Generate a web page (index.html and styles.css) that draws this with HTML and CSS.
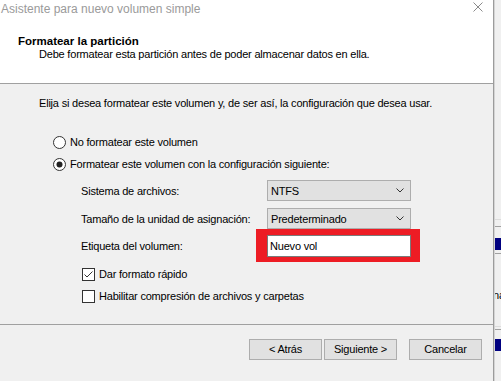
FILE: index.html
```html
<!DOCTYPE html>
<html lang="es">
<head>
<meta charset="utf-8">
<title>Asistente para nuevo volumen simple</title>
<link rel="stylesheet" href="styles.css">
</head>
<body>
<div class="screen">
  <div class="dialog">
    <div class="top">
      <div class="titlebar">
        <span class="title">Asistente para nuevo volumen simple</span>
        <svg class="close" width="10" height="10" viewBox="0 0 10 10"><path d="M0.5 0.5 L9.5 9.5 M9.5 0.5 L0.5 9.5" stroke="#8a8a8a" stroke-width="1" fill="none"/></svg>
      </div>
      <div class="h-title">Formatear la partición</div>
      <div class="h-sub">Debe formatear esta partición antes de poder almacenar datos en ella.</div>
    </div>
    <div class="body">
      <div class="intro">Elija si desea formatear este volumen y, de ser así, la configuración que desea usar.</div>
      <div class="opt opt-first">
        <svg class="mark" width="13" height="13" viewBox="0 0 13 13"><circle cx="6.5" cy="6.5" r="6" fill="#fff" stroke="#333"/></svg>
        <span class="opt-label">No formatear este volumen</span>
      </div>
      <div class="opt">
        <svg class="mark" width="13" height="13" viewBox="0 0 13 13"><circle cx="6.5" cy="6.5" r="6" fill="#fff" stroke="#333"/><circle cx="6.5" cy="6.5" r="3" fill="#222"/></svg>
        <span class="opt-label">Formatear este volumen con la configuración siguiente:</span>
      </div>
      <div class="field field-fs">
        <span class="f-label">Sistema de archivos:</span>
        <div class="select"><span>NTFS</span><svg width="8" height="5" viewBox="0 0 8 5"><path d="M0.5 0.5 L4 4 L7.5 0.5" fill="none" stroke="#333"/></svg></div>
      </div>
      <div class="field field-alloc">
        <span class="f-label">Tamaño de la unidad de asignación:</span>
        <div class="select"><span>Predeterminado</span><svg width="8" height="5" viewBox="0 0 8 5"><path d="M0.5 0.5 L4 4 L7.5 0.5" fill="none" stroke="#333"/></svg></div>
      </div>
      <div class="field field-vol">
        <span class="f-label">Etiqueta del volumen:</span>
        <div class="textbox-wrap">
          <div class="textbox">Nuevo vol</div>
          <div class="highlight"></div>
        </div>
      </div>
      <div class="chk chk-first">
        <svg class="mark" width="13" height="13" viewBox="0 0 13 13"><rect x="0.5" y="0.5" width="12" height="12" fill="#fff" stroke="#333"/><path d="M2.5 6.5 L5 9 L10.5 3.5" fill="none" stroke="#333"/></svg>
        <span class="chk-label">Dar formato rápido</span>
      </div>
      <div class="chk">
        <svg class="mark" width="13" height="13" viewBox="0 0 13 13"><rect x="0.5" y="0.5" width="12" height="12" fill="#fff" stroke="#333"/></svg>
        <span class="chk-label">Habilitar compresión de archivos y carpetas</span>
      </div>
    </div>
    <div class="footer">
      <div class="btn">&lt; Atrás</div>
      <div class="btn">Siguiente &gt;</div>
      <div class="btn btn-cancel">Cancelar</div>
    </div>
  </div>
  <div class="backdrop">
    <div class="bd-fill bd-a"></div>
    <div class="bd-line-light"></div>
    <div class="bd-fill bd-b"></div>
    <div class="bd-line"></div>
    <div class="bd-fill bd-c"></div>
    <div class="bd-bar"></div>
    <div class="bd-fill bd-d"></div>
    <div class="bd-line"></div>
    <div class="bd-text">na</div>
    <div class="bd-fill bd-e"></div>
    <div class="bd-line-light"></div>
    <div class="bd-fill bd-f"></div>
    <div class="bd-line"></div>
    <div class="bd-fill bd-g"></div>
    <div class="bd-bar"></div>
  </div>
</div>
</body>
</html>
```
FILE: styles.css
```css
html, body {
  margin: 0;
  padding: 0;
}
body {
  font-family: "Liberation Sans", Arial, sans-serif;
  font-size: 11px;
  color: #000;
  background: #f0f0f0;
  width: 501px;
  height: 381px;
  overflow: hidden;
}
.screen {
  display: flex;
  width: 501px;
  height: 381px;
}
.dialog {
  width: 493px;
  height: 381px;
  flex: none;
  display: flex;
  flex-direction: column;
  background: #f0f0f0;
  border-right: 1px solid #9c9c9c;
}
.top {
  background: #fff;
  height: 83px;
  flex: none;
  border-bottom: 1px solid #a0a0a0;
}
.titlebar {
  display: flex;
  justify-content: space-between;
  align-items: flex-start;
  height: 35px;
  padding: 0 10px 0 1px;
}
.title {
  font-size: 12px;
  line-height: 15px;
  padding-top: 2px;
  color: #9a9a9a;
}
.close {
  margin-top: 2px;
}
.h-title {
  font-weight: bold;
  font-size: 11.5px;
  line-height: 13px;
  padding-left: 18px;
}
.h-sub {
  line-height: 13px;
  padding-left: 39px;
  letter-spacing: -0.2px;
}
.body {
  flex: 1;
  letter-spacing: -0.2px;
}
.intro {
  margin-top: 11px;
  line-height: 16px;
  padding-left: 39px;
}
.opt {
  display: flex;
  align-items: center;
  height: 22px;
  padding-left: 53px;
}
.opt-first {
  margin-top: 20px;
}
.opt-label {
  margin-left: 4px;
}
.field {
  display: flex;
  align-items: center;
  padding-left: 81px;
}
.f-label {
  width: 186px;
  flex: none;
}
.field-fs {
  margin-top: 5px;
  height: 21px;
}
.field-alloc {
  margin-top: 7px;
  height: 21px;
}
.field-vol {
  margin-top: 6px;
  height: 22px;
}
.select {
  box-sizing: border-box;
  width: 144px;
  height: 21px;
  background: #e1e1e1;
  border: 1px solid #adadad;
  display: flex;
  align-items: center;
  justify-content: space-between;
  padding: 0 6px 0 3px;
}
.textbox-wrap {
  position: relative;
  width: 144px;
  height: 22px;
}
.textbox {
  box-sizing: border-box;
  width: 144px;
  height: 22px;
  background: #fff;
  border: 1px solid #7a7a7a;
  padding-left: 2px;
  line-height: 20px;
}
.highlight {
  position: absolute;
  left: -11px;
  top: -6px;
  width: 164px;
  height: 33px;
  box-sizing: border-box;
  border-style: solid;
  border-color: #ed1c24;
  border-width: 6px 9px 5px 11px;
  pointer-events: none;
}
.chk {
  display: flex;
  align-items: center;
  height: 22px;
  padding-left: 82px;
}
.chk-first {
  margin-top: 6px;
}
.chk-label {
  margin-left: 4px;
}
.mark {
  flex: none;
}
.footer {
  flex: none;
  height: 42px;
  border-top: 1px solid #a0a0a0;
  display: flex;
  justify-content: flex-end;
  align-items: flex-start;
  padding: 14px 11px 0 0;
  box-sizing: content-box;
  gap: 2px;
}
.btn {
  box-sizing: border-box;
  width: 73px;
  height: 21px;
  background: #e1e1e1;
  border: 1px solid #adadad;
  text-align: center;
  line-height: 19px;
  letter-spacing: -0.2px;
}
.btn-cancel {
  margin-left: 10px;
}
.backdrop {
  flex: 1;
  display: flex;
  flex-direction: column;
  background: #f0f0f0;
  border-left: 1px solid #d4d4d4;
  overflow: hidden;
}
.bd-a { height: 219px; }
.bd-b { height: 6px; }
.bd-c { height: 11px; }
.bd-d { height: 3px; }
.bd-e { height: 24px; }
.bd-f { height: 2px; }
.bd-g { height: 9px; }
.bd-line-light {
  height: 1px;
  background: #dcdcdc;
}
.bd-line {
  height: 1px;
  background: #a0a0a0;
}
.bd-bar {
  height: 12px;
  background: #000080;
}
.bd-text {
  margin-top: 34px;
  margin-left: -2px;
  height: 14px;
  line-height: 14px;
  white-space: nowrap;
}
```
